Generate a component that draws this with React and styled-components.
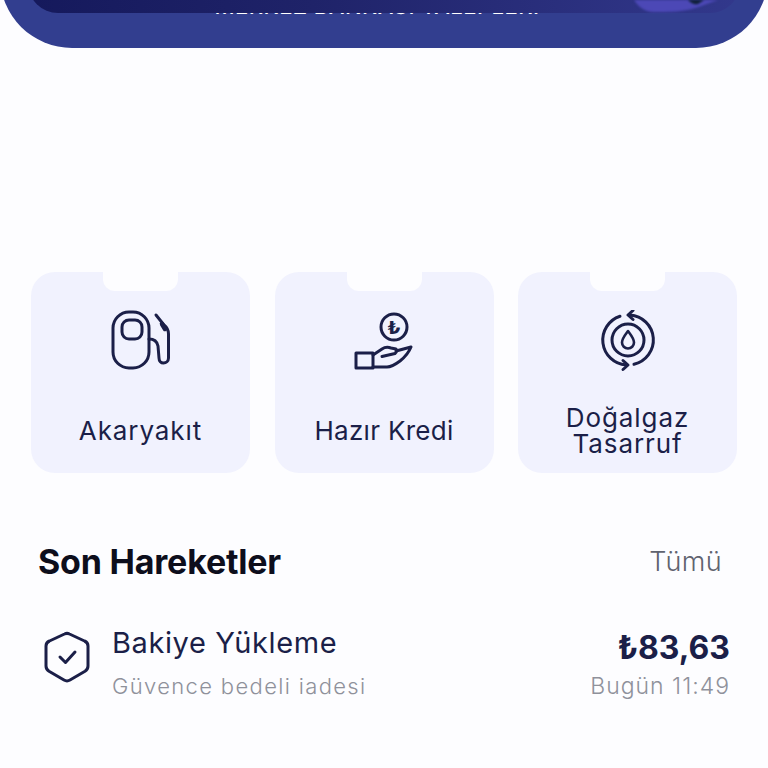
import React from "react";
import styled, { createGlobalStyle } from "styled-components";

const ink = "#1b1f48";

const GlobalStyle = createGlobalStyle`
  html, body {
    margin: 0;
    padding: 0;
    background: #fdfdff;
  }
  body {
    font-family: "Inter", "Liberation Sans", sans-serif;
    color: ${ink};
    overflow: hidden;
  }
`;

const Page = styled.div`
  width: 768px;
  height: 768px;
  overflow: hidden;
  display: flex;
  flex-direction: column;
`;

const Hero = styled.header`
  position: relative;
  height: 72px;
  margin-top: -24px;
  flex: none;
  overflow: hidden;
  background: #323e8f;
  border-radius: 0 0 72px 72px;
`;

const HeroCard = styled.div`
  position: relative;
  z-index: 1;
  height: 37px;
  margin: 0 28px;
  border-radius: 0 0 30px 30px;
  background: linear-gradient(90deg, #15195c 0%, #1f2369 40%, #32388c 100%);
`;

const HeroCaption = styled.div`
  margin-top: -17px;
  text-align: center;
  color: #fff;
  font-size: 22px;
  font-weight: 500;
  line-height: 20px;
  letter-spacing: 0.5px;
  padding-right: 14px;
  white-space: nowrap;
`;

const HeroArt = styled.svg`
  position: absolute;
  z-index: 2;
  right: 38px;
  top: 24px;
  width: 100px;
  height: 14px;
  filter: blur(1.2px);
`;

const Services = styled.section`
  display: grid;
  grid-template-columns: repeat(3, 219px);
  justify-content: space-between;
  margin: 224px 31px 0;
`;

const Service = styled.div`
  position: relative;
  height: 201px;
  border-radius: 24px;
  background: #f1f2fe;
  display: flex;
  flex-direction: column;
  align-items: center;

  &::before {
    content: "";
    position: absolute;
    top: 0;
    left: 72px;
    width: 75px;
    height: 19px;
    background: #fdfdff;
    border-radius: 0 0 12px 12px;
  }
`;

const IconSlot = styled.div`
  height: 64px;
  margin-top: 38px;
  display: flex;
  justify-content: center;
`;

const ServiceLabel = styled.div`
  height: 84px;
  margin-top: 15px;
  display: flex;
  align-items: center;
  justify-content: center;
  text-align: center;
  font-size: 26px;
  line-height: 26px;
  letter-spacing: ${(p) => p.$track}px;
  color: ${ink};
`;

const LabelText = styled.span`
  display: block;
  width: ${(p) => (p.$narrow ? "160px" : "auto")};
`;

const SectionHead = styled.div`
  display: flex;
  justify-content: space-between;
  align-items: center;
  margin: 68px 46px 0 38px;
  height: 40px;
`;

const SectionTitle = styled.h2`
  margin: 0;
  font-size: 34px;
  font-weight: 700;
  letter-spacing: -0.2px;
  color: #0d0e1c;
`;

const SeeAll = styled.span`
  font-size: 27px;
  font-weight: 300;
  letter-spacing: 0.4px;
  color: #60636f;
`;

const Transaction = styled.div`
  display: flex;
  align-items: flex-start;
  margin: 39px 38px 0 44px;
`;

const TxIcon = styled.svg`
  flex: none;
  width: 46px;
  height: 52px;
  margin-top: 11px;
  margin-right: 22px;
`;

const TxBody = styled.div`
  flex: 1;
  display: flex;
  flex-direction: column;
`;

const TxTitle = styled.div`
  margin-top: 6px;
  font-size: 29px;
  line-height: 34px;
  letter-spacing: 0.6px;
  color: ${ink};
`;

const TxNote = styled.div`
  margin-top: 13px;
  font-size: 22px;
  line-height: 26px;
  font-weight: 300;
  letter-spacing: 1.35px;
  color: #8f919b;
`;

const TxSide = styled.div`
  display: flex;
  flex-direction: column;
  align-items: flex-end;
`;

const TxAmount = styled.div`
  margin-top: 10px;
  font-size: 32px;
  line-height: 36px;
  font-weight: 700;
  color: ${ink};
`;

const TxTime = styled.div`
  margin-top: 7px;
  font-size: 23px;
  line-height: 26px;
  font-weight: 300;
  letter-spacing: 1px;
  color: #8f919b;
`;

const stroke = {
  fill: "none",
  stroke: ink,
  strokeWidth: 3,
  strokeLinecap: "round",
  strokeLinejoin: "round",
};

const FuelIcon = () => (
  <svg width="64" height="64" viewBox="0 0 64 64" {...stroke}>
    <rect x="4" y="2" width="36" height="56" rx="16" />
    <rect x="13" y="10" width="20" height="19" rx="7" />
    <path d="M40 29c5 0 8 2 9 7l1 12c0 3 2 5 4.500 5s5-2 5-5V24c0-4-2-7-4.500-9L47 5" />
    <path d="M53 14l3 5" strokeWidth="4.500" />
  </svg>
);

const LoanIcon = () => (
  <svg width="64" height="64" viewBox="0 0 64 64" {...stroke}>
    <circle cx="42" cy="17" r="13" />
    <text x="42" y="23.500" textAnchor="middle" fontSize="18" fontWeight="700" fill={ink} stroke="none" fontFamily="DejaVu Sans, sans-serif">₺</text>
    <rect x="4" y="43" width="17" height="15" />
    <path d="M21 45l9-6c3-2 6-2 9-1l5 1c1 .5 1 3-1 4.500l-13 3" />
    <path d="M44 41l15-4c-2 5-6 10-11 14-4 3-8 6-13 6H21" />
  </svg>
);

const GasIcon = () => (
  <svg width="64" height="64" viewBox="0 0 64 64" {...stroke}>
    <path d="M24 6.300A25 25 0 0 0 30 55" />
    <path d="M27 50.500l5 4.500-5 4.500" />
    <path d="M38 54.300A25 25 0 0 0 34 5" />
    <path d="M37 .5l-5 4.500 5 4.500" />
    <circle cx="32" cy="30" r="16" />
    <path d="M32 21c3 4 6 7.500 6 11.500a6 6 0 0 1-12 0c0-4 3-7.500 6-11.500z" strokeWidth="2.600" />
  </svg>
);

const SERVICES = [
  { label: "Akaryakıt", Icon: FuelIcon, track: 0.9 },
  { label: "Hazır Kredi", Icon: LoanIcon, track: 0.3 },
  { label: "Doğalgaz Tasarruf", Icon: GasIcon, track: 0.9, narrow: true },
];

export default function App() {
  return (
    <Page>
      <GlobalStyle />
      <Hero>
        <HeroCard />
        <HeroCaption>MERKEZ BANKASI TALEPLERİ</HeroCaption>
        <HeroArt viewBox="0 0 100 14">
          <path d="M4 0h84l-14 5c-10 4-22 7-40 7H24C14 12 8 6 4 0z" fill="#4c48b6" />
          <path d="M58 0h16l-6 4c-4 1-7-1-10-4z" fill="#0f2038" />
        </HeroArt>
      </Hero>
      <Services>
        {SERVICES.map(({ label, Icon, narrow, track }) => (
          <Service key={label}>
            <IconSlot>
              <Icon />
            </IconSlot>
            <ServiceLabel $track={track}>
              <LabelText $narrow={narrow}>{label}</LabelText>
            </ServiceLabel>
          </Service>
        ))}
      </Services>
      <SectionHead>
        <SectionTitle>Son Hareketler</SectionTitle>
        <SeeAll>Tümü</SeeAll>
      </SectionHead>
      <Transaction>
        <TxIcon viewBox="0 0 46 52" {...stroke}>
          <path d="M20.500 3c1.600-.8 3.400-.8 5 0l15 7c2.400 1 3.500 2.500 3.500 5v20c0 2.500-1 4-3 5.300L26 49c-2 1.200-4 1.200-6 0L5 40.300C3 39 2 37.500 2 35V15c0-2.500 1.100-4 3.500-5z" />
          <path d="M16 26l5.500 5.500L31 21" />
        </TxIcon>
        <TxBody>
          <TxTitle>Bakiye Yükleme</TxTitle>
          <TxNote>Güvence bedeli iadesi</TxNote>
        </TxBody>
        <TxSide>
          <TxAmount>₺83,63</TxAmount>
          <TxTime>Bugün 11:49</TxTime>
        </TxSide>
      </Transaction>
    </Page>
  );
}
